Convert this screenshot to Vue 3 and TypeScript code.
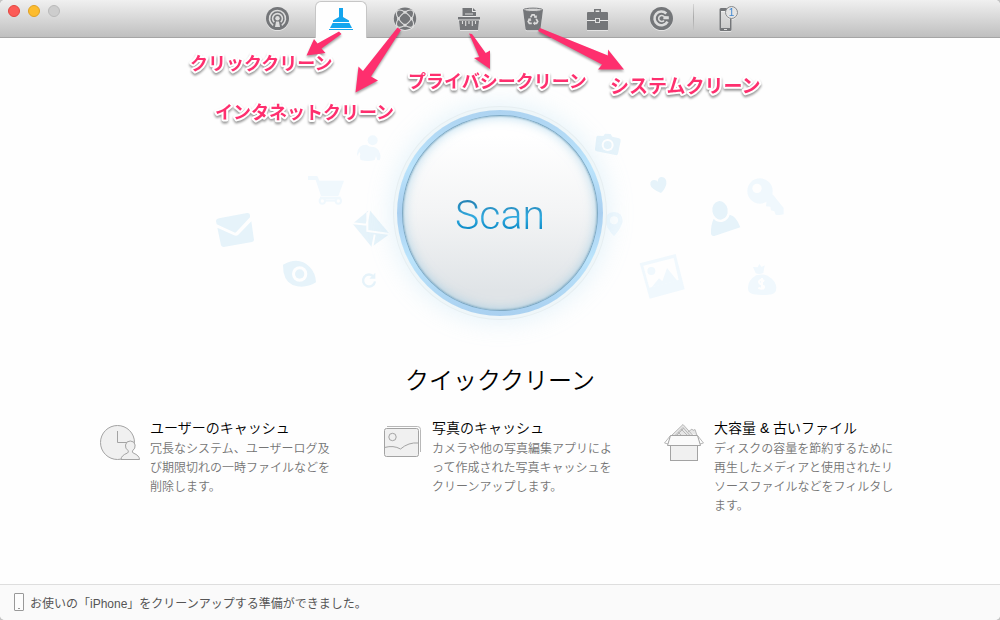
<script setup lang="ts">
import { ref } from 'vue'

interface Tab {
  id: string
  label: string
}

interface Feature {
  id: string
  title: string
  text: string
}

interface Note {
  text: string
  x: number
  y: number
  size: number
  arrow: string
}

const tabs: Tab[] = [
  { id: 'status', label: 'ステータス' },
  { id: 'quick', label: 'クイッククリーン' },
  { id: 'internet', label: 'インターネットクリーン' },
  { id: 'privacy', label: 'プライバシークリーン' },
  { id: 'system', label: 'システムクリーン' },
  { id: 'tools', label: 'ツール' },
  { id: 'restore', label: '復元' },
]

const active = ref('quick')

const features: Feature[] = [
  {
    id: 'user',
    title: 'ユーザーのキャッシュ',
    text: '冗長なシステム、ユーザーログ及び期限切れの一時ファイルなどを削除します。',
  },
  {
    id: 'photo',
    title: '写真のキャッシュ',
    // The zero-width space allows a line to start with the small kana.
    text: 'カメラや他の写真編集アプリによ\u200bって作成された写真キャッシュをクリーンアップします。',
  },
  {
    id: 'files',
    title: '大容量 & 古いファイル',
    text: 'ディスクの容量を節約するために再生したメディアと使用されたリソースファイルなどをフィルタします。',
  },
]

const notes: Note[] = [
  {
    text: 'クリッククリーン',
    x: 190,
    y: 70,
    size: 18,
    arrow: '339,31.5 341.5,34 321.5,48.5 325.5,53 306.5,55.5 314,39 317.5,43.5',
  },
  {
    text: 'インタネットクリーン',
    x: 215,
    y: 119,
    size: 18,
    arrow: '397.5,27.5 401,30 371,76.5 378,80.5 355.5,92.5 358.5,66.5 363,71',
  },
  {
    text: 'プライバシークリーン',
    x: 408,
    y: 88,
    size: 18,
    arrow: '469,33.5 472,34 485.7,53 490,50.5 490,69 474,58 479.3,57',
  },
  {
    text: 'システムクリーン',
    x: 610,
    y: 93,
    size: 19,
    arrow: '540,28 538,31 602,64.5 598,69.5 624,69.5 608,49.5 608,55.5',
  },
]
</script>

<template>
  <div class="window" lang="ja">
    <header class="titlebar">
      <div class="lights">
        <button class="light close" type="button" aria-label="閉じる"></button>
        <button class="light minimize" type="button" aria-label="しまう"></button>
        <button class="light zoom" type="button" aria-label="拡大" disabled></button>
      </div>

      <nav class="tabs">
        <button
          v-for="tab in tabs"
          :key="tab.id"
          class="tab"
          :class="{ active: tab.id === active }"
          type="button"
          :aria-label="tab.label"
          @click="active = tab.id"
        >
          <svg v-if="tab.id === 'status'" class="icon" viewBox="0 0 28 28">
            <circle class="solid" cx="14.5" cy="14.5" r="11.5" />
            <path class="cut" d="M10.2 21.3a8 8 0 1 1 8.600 0" />
            <path class="cut" d="M11.3 18.2a4.900 4.900 0 1 1 6.400 0" />
            <circle class="cutfill" cx="14.5" cy="14.3" r="2.2" />
            <path class="cutfill" d="M13 17.600h3l1 5.400h-5z" />
          </svg>
          <svg v-else-if="tab.id === 'quick'" class="icon" viewBox="0 0 28 28">
            <path class="solid" d="M12 4h4v9l6 3.400v1.600H6v-1.600l6-3.400z" />
            <path class="solid" d="M5.600 19h16.800l2.600 5H3z" />
            <path class="solid" d="M2 25h24v1H2z" />
          </svg>
          <svg v-else-if="tab.id === 'internet'" class="icon" viewBox="0 0 28 28">
            <circle class="solid" cx="14" cy="14.700" r="11.200" />
            <g transform="rotate(45 14 14.7)">
              <ellipse class="cut thin" cx="14" cy="14.700" rx="5.200" ry="11" />
              <ellipse class="cut thin" cx="14" cy="14.700" rx="11" ry="5.200" />
              <circle class="cutfill" cx="9.400" cy="10.100" r="1.500" />
              <circle class="cutfill" cx="18.600" cy="10.100" r="1.500" />
              <circle class="cutfill" cx="9.400" cy="19.300" r="1.500" />
              <circle class="cutfill" cx="18.600" cy="19.300" r="1.500" />
            </g>
          </svg>
          <svg v-else-if="tab.id === 'privacy'" class="icon" viewBox="0 0 28 28">
            <path class="solid" d="M7.500 4H17v4h4v4H7.500z" />
            <path class="solid" d="M18 4l3 3h-3z" />
            <path class="cutfill" d="M10 9.500h8v1h-8z" />
            <path class="solid" d="M3 13h22v2.500H3z" />
            <path class="solid" d="M4 16.500h20l-1 9.500H5z" />
            <path class="cut thin" d="M7.500 17v3M10.700 17v5M14 17v3M17.300 17v5M20.500 17v3" />
          </svg>
          <svg v-else-if="tab.id === 'system'" class="icon" viewBox="0 0 28 28">
            <path class="solid" d="M4 5.500h20L21.500 25q-.3 1.300-1.600 1.300H8.100q-1.300 0-1.600-1.300z" />
            <ellipse class="rim" cx="14" cy="5.800" rx="9.500" ry="1.700" />
            <g class="recycle">
              <path d="M11.600 13.400l1.500-2.500h2l1.400 2.200M17.200 14.800l1.500 2.700-1.100 1.900h-2.400M12.800 19.400h-2.400l-1.200-1.900 1.400-2.300" />
              <path d="M17.700 11.700l-.4 2.300-2-.7zM15.900 17.800v3l-1.800-1.500zM9.200 15.100l2.300-.5.3 2.300z" class="heads" />
            </g>
          </svg>
          <svg v-else-if="tab.id === 'tools'" class="icon" viewBox="0 0 28 28">
            <path class="solid" d="M11 5h7v3h6q1 0 1 1v7H4V9q0-1 1-1h6zM12.600 6.600V8h3.800V6.600z" fill-rule="evenodd" />
            <path class="solid" d="M4 17h21v8.500q0 .5-1 .5H5q-1 0-1-.5z" />
            <path class="cutfill" d="M12 14h5v5h-5z" />
            <path class="solid" d="M13 15h3v3h-3z" />
          </svg>
          <svg v-else class="icon" viewBox="0 0 28 28">
            <circle class="solid" cx="14.500" cy="14.500" r="11.500" />
            <path class="cut wide" d="M19.300 9.500a6.900 6.900 0 1 0 1.200 8.200" />
            <path class="cut" d="M17 12.600a3 3 0 1 0 0 3.800" />
            <path class="cutfill" d="M16.300 15.300l.3-3.200 5.200.2v3z" />
          </svg>
        </button>

        <span class="divider"></span>

        <button class="tab" type="button" aria-label="iPhone">
          <svg class="icon" viewBox="0 0 28 28">
            <path
              class="solid"
              fill-rule="evenodd"
              d="M10 4h9q1.500 0 1.500 1.500v20q0 1.500-1.500 1.500h-9q-1.500 0-1.500-1.500v-20Q8.500 4 10 4zM10 7v17h9V7z"
            />
            <path class="cutfill" d="M13 25h3v1h-3z" />
            <circle class="badge" cx="20.500" cy="8.500" r="6" />
            <text class="count" x="20.500" y="12" text-anchor="middle">1</text>
          </svg>
        </button>
      </nav>
    </header>

    <main class="content">
      <svg class="decor" viewBox="0 0 1800 570" aria-hidden="true">
        <g class="faint">
          <circle cx="518" cy="61" r="15" />
          <path d="M471 101q3-28 29-27 8 8 21 7 14 3 18 17 5 13 0 23l-7-1-4-12-4 12q-20 6-42 0-5-8-1-17l-3-8-5 13z" />
          <path d="M324 168h28l6 14h74l-17 46h-52l-16-48h-23z" />
          <path d="M360 230h62v7h-62z" />
          <circle class="hollow" cx="367" cy="243" r="8" />
          <circle class="hollow" cx="415" cy="243" r="8" />
          <path d="M374 238h34v7h-34z" />
        </g>
        <g class="pale">
          <path d="M48 304q0-7 9-9l84-16q8-1 9 6v7l-42 45q-3 2-6 0l-52-24z" />
          <path d="M52 323l50 23q8 3 13-2l39-40 8 55q0 6-6 7l-85 15q-6 0-8-5z" />
          <path d="M508 269l61 73-54 39-57-70z" />
          <path class="fold" d="M458 310l42 4 8-45M502 277v56l67 9M524 344l-7 38" />
          <path d="M249 434q48-26 80 7 18 18 19 46-34 21-70 8-30-15-29-61z" />
          <circle class="white" cx="299" cy="462" r="23" />
          <circle cx="299" cy="462" r="14" />
          <path class="reload" d="M521 470a18 18 0 1 0 4 14" />
          <path d="M526 458v18h-18z" />
        </g>
        <g transform="translate(1170)">
          <g class="pale">
            <path d="M23 47l17 1 5-7 17 1 5 8 20 5q6 2 5 8l-8 38q-2 6-8 4l-56-11q-6-2-5-8l4-34q1-5 4-5z" />
            <circle class="white" cx="53" cy="75" r="18" />
            <circle cx="53" cy="75" r="12" />
            <path d="M213 219q-30-13-32-25-1-14 12-14 8 0 10 5 1-14 12-14 16 1 14 21-3 15-16 27z" />
            <ellipse cx="390" cy="271" rx="23" ry="28" transform="rotate(-10 390 271)" />
            <path d="M371 296q11 13 28 9 15-4 20-21 20 3 32 38l-78 26q-9 0-10-7-1-26 8-45z" />
          </g>
          <g class="faint">
            <path d="M72 276q26 2 26 27-2 18-26 46-25-28-26-46 0-25 26-27z" />
            <circle class="white" cx="72" cy="301" r="12" />
            <circle cx="510" cy="213" r="38" />
            <path d="M530 238l18-15 33 41v19q-12 4-24 1l-4-10-10-3-2-11-13-1z" />
            <circle class="white" cx="501" cy="205" r="14" />
            <path d="M149 430l108-28 27 106-105 28z" />
            <path class="white" d="M160 437l91-23 15 66-88 23z" />
            <circle cx="184" cy="453" r="12" />
            <path d="M185 502l22-27 10 9 14-40 31 38z" />
            <path d="M489 441l14 1 5-10 7 9 9-5-4 23q-12 6-23 1z" />
            <path d="M498 466q20-6 35 1 26 16 26 37 0 20-24 20-25 2-44-1-18-3-17-20 0-22 24-37z" />
            <path class="dollar" d="M523 483q-14-7-16 2 0 5 8 8 9 4 7 10-5 7-17 0M516 474v34" />
          </g>
        </g>
      </svg>

      <button class="scan" type="button">
        <span class="disc"><span class="scan-label">Scan</span></span>
      </button>

      <h1 class="heading">クイッククリーン</h1>

      <section class="features">
        <article v-for="feature in features" :key="feature.id" class="feature">
          <svg v-if="feature.id === 'user'" class="art" viewBox="0 0 40 40">
            <circle cx="17.500" cy="19.500" r="17" />
            <path class="line" d="M17.500 8v11.500H28" />
            <path d="M21 36.500q0-4 6.500-6.500 1.500-1 .5-2.500-3-2-2.500-5.500.5-4 4.800-4t4.800 4q.4 3.500-2.300 5.500-1 1.500.4 2.500 6.300 2.500 6.300 6.500z" />
          </svg>
          <svg v-else-if="feature.id === 'photo'" class="art" viewBox="0 0 40 40">
            <path class="line soft" d="M5 3.500h30.500q3 0 3 3V29" />
            <rect x="2.500" y="5.500" width="34" height="28" rx="2" />
            <circle cx="10.500" cy="14" r="3.700" />
            <path class="line" d="M2.500 24.500q9-2.500 16 1.500 8-7 18-6" />
          </svg>
          <svg v-else class="art" viewBox="0 0 40 40">
            <path class="papers" d="M7.500 12.500L19 1.500l10 11zM24 9l4-3 1 1.500 2-1 2 6" />
            <path class="line soft" d="M11 12.500l8-8 7 8M14 9l3 3M17 6l6 6M20 5l-7 7" />
            <path class="line soft" d="M6.500 12.500L.5 20l3.500 1M33.500 12.500l6 7.500-3.500 1" />
            <rect x="6.500" y="22.500" width="27" height="15" />
            <path class="lid" d="M6.500 12.500h27l3 10h-33z" />
          </svg>
          <div class="copy">
            <h2>{{ feature.title }}</h2>
            <p>{{ feature.text }}</p>
          </div>
        </article>
      </section>
    </main>

    <footer class="status">
      <svg class="phone" viewBox="0 0 10 18">
        <rect x=".5" y=".5" width="9" height="17" rx=".5" />
        <path d="M4 15.500h2" />
      </svg>
      <span>お使いの「iPhone」をクリーンアップする準備ができました。</span>
    </footer>

    <svg class="notes" viewBox="0 0 1000 130">
      <g v-for="note in notes" :key="note.text">
        <polygon class="arrow" :points="note.arrow" />
        <text class="note" :x="note.x" :y="note.y" :font-size="note.size">{{ note.text }}</text>
      </g>
    </svg>
  </div>
</template>

<style>
html {
  background: #c4c4c4;
}
body {
  margin: 0;
}
</style>

<style scoped>
.window {
  position: relative;
  display: flex;
  flex-direction: column;
  min-height: 100vh;
  overflow: hidden;
  border-radius: 5px;
  background: #fefefe;
  font-family: 'Liberation Sans', 'Noto Sans CJK JP', sans-serif;
}

button {
  padding: 0;
  border: 0;
  background: none;
  font: inherit;
}

.titlebar {
  display: grid;
  grid-template-columns: 1fr auto 1fr;
  box-sizing: border-box;
  height: 38px;
  padding-left: 2px;
  border-bottom: 1px solid #a5a5a5;
  background: linear-gradient(#f0f0f0, #dadada 45%, #bfbfbf);
}

.lights {
  display: flex;
  gap: 8px;
  padding: 5px 6px;
}

.light {
  box-sizing: border-box;
  width: 12px;
  height: 12px;
  border: 1px solid;
  border-radius: 50%;
}

.close {
  border-color: #e2463f;
  background: #fc5b57;
}

.minimize {
  border-color: #dfa023;
  background: #fdbc2e;
}

.zoom {
  border-color: #b9b9b9;
  background: #cdcdcd;
}

.tabs {
  display: flex;
  gap: 12px;
}

.tab {
  width: 52px;
  height: 36px;
  color: #747679;
}

.tab.active {
  box-sizing: border-box;
  height: 37px;
  margin-top: 1px;
  padding-bottom: 4px;
  border: 1px solid #c6c6c6;
  border-bottom: 0;
  border-radius: 6px 6px 0 0;
  background: #fefefe;
  box-shadow: 0 1px 0 #fefefe;
  color: #14a5ee;
}

.icon {
  display: block;
  width: 28px;
  height: 28px;
  margin: 0 auto;
}

.tab:not(.active) .icon {
  filter: drop-shadow(0 1px 0 rgba(255, 255, 255, 0.5));
}

.solid {
  fill: currentColor;
}

.cut {
  fill: none;
  stroke: #dcdcdc;
  stroke-width: 1.6;
}

.thin {
  stroke-width: 1.1;
}

.wide {
  stroke-width: 2.6;
}

.cutfill {
  fill: #dcdcdc;
}

.rim {
  fill: #d5d5d5;
  stroke: currentColor;
}

.recycle {
  fill: none;
  stroke: #dcdcdc;
  stroke-width: 1.7;
}

.heads {
  fill: #dcdcdc;
  stroke-width: 0.6;
}

.badge {
  fill: #e4e4e4;
  stroke: #87898b;
}

.count {
  fill: #3f86d0;
  font-size: 10px;
}

.divider {
  width: 1px;
  height: 26px;
  margin: 4px -7px 0 -6px;
  background: linear-gradient(#d5d5d5, #aaa 50%, #c5c5c5);
}

.content {
  position: relative;
  display: flex;
  flex: 1;
  flex-direction: column;
  align-items: center;
  padding: 72px 0 24px;
}

.decor {
  position: absolute;
  top: 82px;
  left: 50%;
  width: 600px;
  height: 190px;
  transform: translateX(-50%);
}

.pale {
  fill: #e6f3fa;
}

.faint {
  fill: #f0f8fd;
}

.white {
  fill: #fefefe;
}

.hollow {
  fill: #fefefe;
  stroke: #f0f8fd;
  stroke-width: 6;
}

.fold,
.dollar {
  fill: none;
  stroke: #fefefe;
  stroke-width: 6;
}

.reload {
  fill: none;
  stroke: #e6f3fa;
  stroke-width: 7;
}

.scan {
  position: relative;
  box-sizing: border-box;
  width: 206px;
  height: 206px;
  padding: 6px;
  border-radius: 50%;
  background: linear-gradient(#add3f1, #bbe4fc 28%, #a9cff0 50%, #bbe4fc 72%, #a9d0f0);
  box-shadow:
    0 0 0 3px #eef6f9,
    0 0 0 4px #e6eef1,
    0 0 24px 6px rgba(165, 215, 242, 0.28);
}

.disc {
  display: grid;
  place-items: center;
  box-sizing: border-box;
  height: 100%;
  padding-top: 4px;
  border-radius: 50%;
  background: linear-gradient(#fff 10%, #f3f4f5 50%, #e0e4e7 90%);
  box-shadow:
    0 0 0 1px #7fa9c3,
    inset 0 0 2px #5f8fa9,
    inset 0 0 12px rgba(125, 190, 225, 0.6);
}

.scan-label {
  background: linear-gradient(#2585b8 25%, #32abe0 55%, #128fca 75%);
  background-clip: text;
  color: transparent;
  font-family: Roboto, 'Liberation Sans', sans-serif;
  font-size: 41px;
  font-weight: 300;
  line-height: 50px;
}

.heading {
  margin: 47px 0 0;
  color: #000;
  font-size: 24px;
  font-weight: 350;
  line-height: 36px;
}

.features {
  display: flex;
  gap: 52px;
  margin-top: 19px;
  padding-right: 6px;
}

.feature {
  display: flex;
  gap: 10px;
}

.art {
  flex: none;
  width: 40px;
  height: 40px;
  margin-top: 5px;
  fill: #f0f0f0;
  stroke: #a3a3a3;
}

.line {
  fill: none;
}

.soft {
  stroke: #b8b8b8;
}

.papers {
  fill: #e6e6e6;
  stroke: #b8b8b8;
}

.lid {
  fill: #fafafa;
}

.copy {
  width: 180px;
}

.copy h2 {
  margin: 0;
  color: #000;
  font-size: 14px;
  font-weight: 350;
  line-height: 21px;
}

.copy p {
  margin: 1px 0 0;
  color: #757575;
  font-size: 12px;
  font-weight: 350;
  line-break: loose;
  line-height: 19px;
}

.status {
  display: flex;
  align-items: center;
  gap: 6px;
  box-sizing: border-box;
  height: 36px;
  padding: 0 14px 1px;
  border-top: 1px solid #dedede;
  background: #fafafa;
  color: #555;
  font-size: 12px;
}

.phone {
  width: 10px;
  height: 18px;
  fill: #fdfdfd;
  stroke: #999;
}

.notes {
  position: absolute;
  top: 0;
  left: 50%;
  width: 1000px;
  height: 130px;
  transform: translateX(-50%);
  pointer-events: none;
}

.arrow {
  fill: #fe2f6e;
  filter: drop-shadow(0 2px 1px rgba(0, 0, 0, 0.35));
}

.note {
  fill: #fe2f6e;
  stroke: #fff;
  stroke-width: 4px;
  stroke-linejoin: round;
  paint-order: stroke;
  font-family: 'Noto Sans CJK JP', sans-serif;
  font-weight: 700;
  filter: drop-shadow(0 2px 1px rgba(0, 0, 0, 0.4));
}
</style>
